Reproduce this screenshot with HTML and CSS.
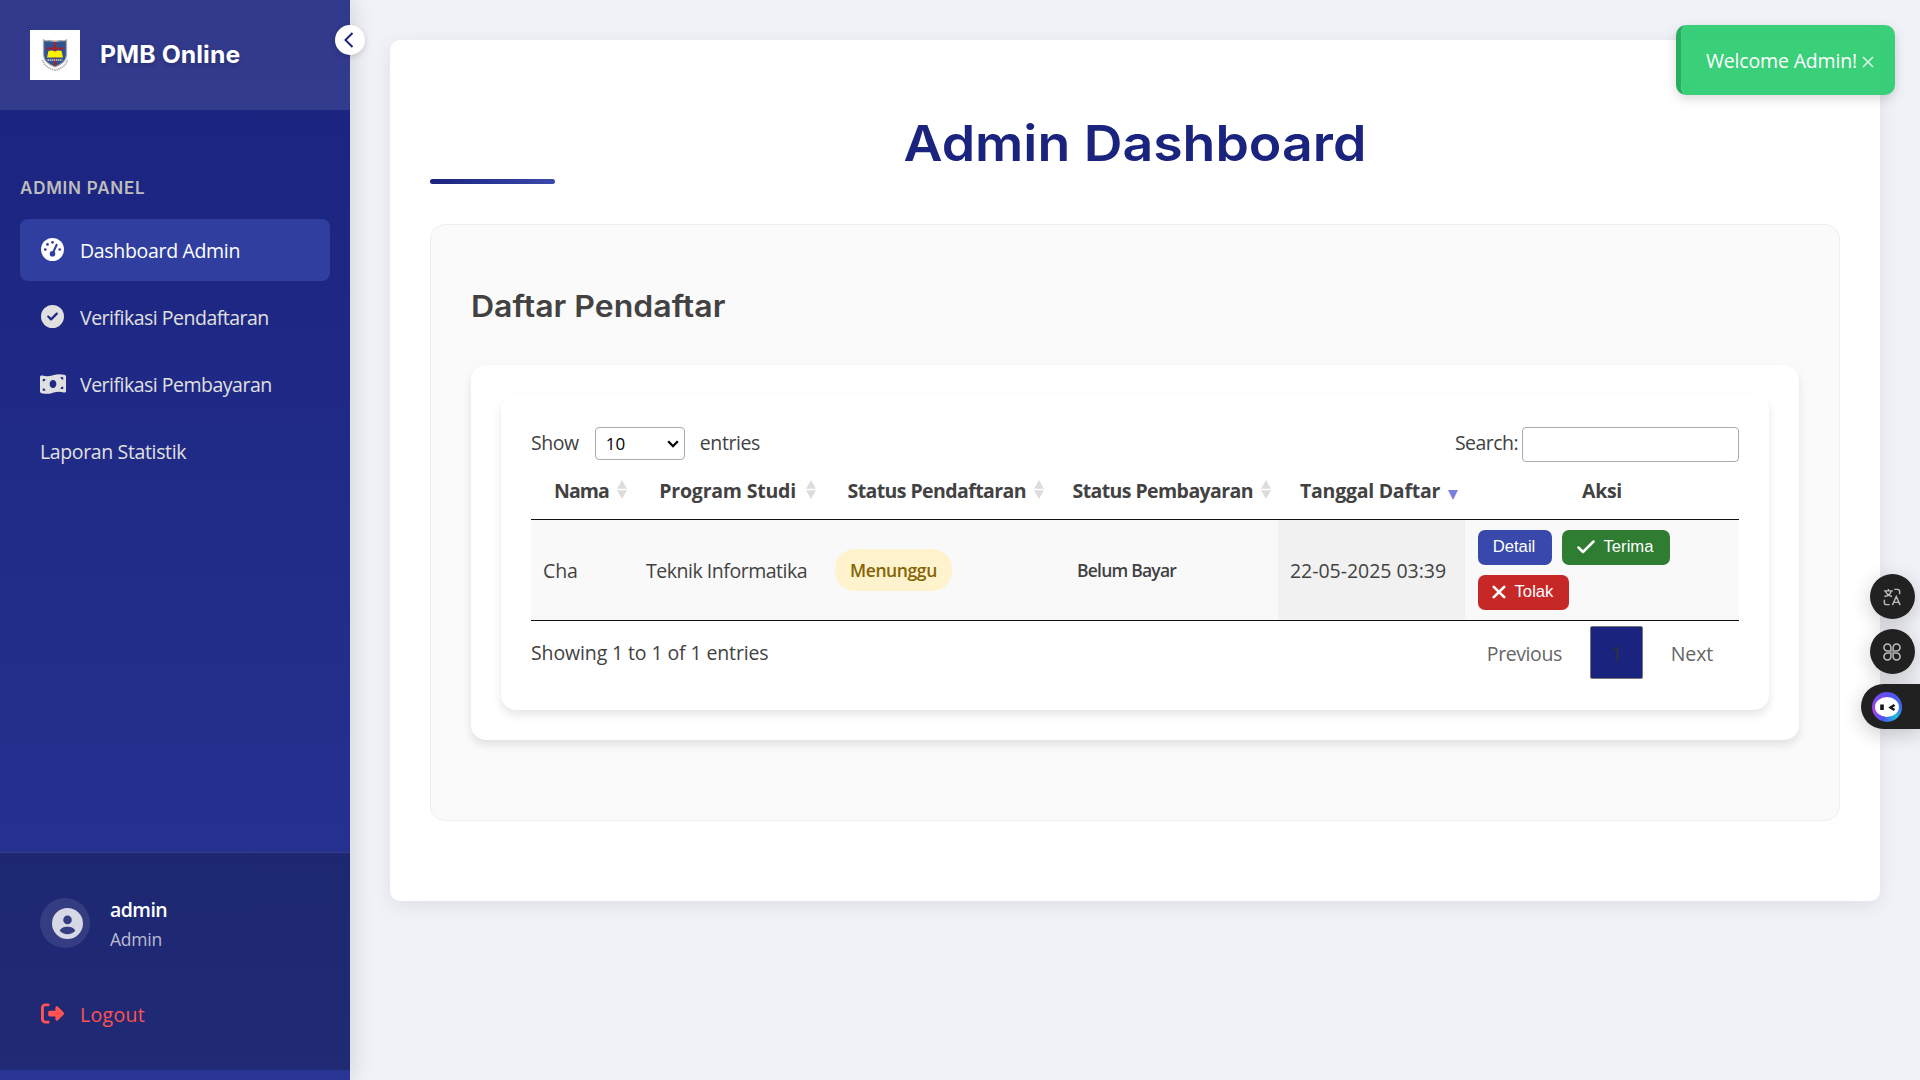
FILE: index.html
```html
<!DOCTYPE html>
<html lang="id">
<head>
<meta charset="utf-8">
<title>PMB Online - Admin Dashboard</title>
<link rel="stylesheet" href="styles.css">
</head>
<body>
<div class="layout">
  <aside class="sidebar">
    <header class="brand">
      <svg class="brand-logo" viewBox="0 0 50 50">
        <rect width="50" height="50" fill="#fff"/>
        <path d="M12.500 30 Q15 38 25 40 Q35 38 37.500 30" fill="none" stroke="#aaa" stroke-width="1.800" stroke-dasharray="1.200 .8"/>
        <path d="M13.500 10 Q16 11.500 19 10.500 Q25 12 31 10.500 Q34 11.500 36.500 10 V25 Q36 33 25 37 Q14 33 13.500 25Z" fill="#315393" stroke="#aaa" stroke-width="1.300"/>
        <path d="M25 12V36M16.500 18.500H33.500" stroke="#a91f2b" stroke-width="2.200"/>
        <path d="M18.500 21Q22 20 25 21.500Q28 20 31.500 21L33 27.500H17Z" fill="#fff200"/>
        <path d="M17.500 30H32.500" stroke="#d0cfc0" stroke-width="1.500" stroke-dasharray="1.500 .6"/>
      </svg>
      <span class="brand-name text">PMB Online</span>
      <button class="collapse" aria-label="Collapse sidebar"><svg viewBox="0 0 10 16"><path d="M8.500 1 1.500 8l7 7" fill="none" stroke="currentColor" stroke-width="2"/></svg></button>
    </header>
    <nav class="menu">
      <div class="menu-label"><span class="text">ADMIN PANEL</span></div>
      <a class="menu-item dashboard active">
        <svg class="menu-icon" viewBox="0 0 512 512"><path fill="currentColor" d="M256 0a256 256 0 1 0 0 512 256 256 0 1 0 0-512z"/><g class="cut"><circle cx="256" cy="96" r="30"/><circle cx="144" cy="144" r="30"/><circle cx="96" cy="256" r="30"/><circle cx="416" cy="256" r="30"/><circle cx="256" cy="352" r="62"/></g><path d="M256 352 348 150" class="needle"/></svg>
        <span class="text">Dashboard Admin</span>
      </a>
      <a class="menu-item">
        <svg class="menu-icon" viewBox="0 0 512 512"><path fill="currentColor" d="M256 512A256 256 0 1 0 256 0a256 256 0 1 0 0 512zM369 209L241 337c-9.400 9.400-24.600 9.400-33.900 0l-64-64c-9.400-9.400-9.400-24.600 0-33.900s24.600-9.400 33.900 0l47 47L335 175c9.400-9.400 24.600-9.400 33.900 0s9.400 24.600 0 33.900z"/></svg>
        <span class="text">Verifikasi Pendaftaran</span>
      </a>
      <a class="menu-item">
        <svg class="menu-icon wide" viewBox="0 0 26 20"><path fill="currentColor" fill-rule="evenodd" d="M0 3.100C0 1.700 1.200 1.300 2.300 1.600 6 2.600 9.500 2.400 13 1.300 17-.1 20.500-.2 24.300.8 25.400 1.100 26 1.800 26 2.800V16.900C26 18.300 24.800 18.700 23.700 18.400 20 17.400 16.500 17.600 13 18.700 9 20.100 5.500 20.200 1.700 19.200.6 18.900 0 18.200 0 17.200ZM13 5.900C10.900 5.900 9.600 7.800 9.600 10S10.900 14.100 13 14.100 16.400 12.200 16.400 10 15.100 5.900 13 5.900ZM2.800 5V7.500C4.300 7.500 5.500 6.500 5.500 5.100ZM2.800 16.700H5.500C5.500 15.200 4.300 14.300 2.800 14.300ZM23.200 15V12.500C21.700 12.500 20.500 13.500 20.500 14.900ZM23.200 3.300 20.500 3.100C20.500 4.700 21.700 5.700 23.200 5.700Z"/></svg>
        <span class="text">Verifikasi Pembayaran</span>
      </a>
      <a class="menu-item report"><span class="text">Laporan Statistik</span></a>
    </nav>
    <footer class="account">
      <div class="profile">
        <div class="avatar"><svg viewBox="0 0 24 24"><path fill="currentColor" fill-rule="evenodd" d="M12 0a12 12 0 1 0 0 24 12 12 0 0 0 0-24Zm0 5.900a3.300 3.300 0 1 1 0 6.600 3.300 3.300 0 0 1 0-6.600ZM6 17.700c1-4.300 11-4.300 12 0-2.800 3.600-9.200 3.600-12 0Z"/></svg></div>
        <div class="who"><strong>admin</strong><small>Admin</small></div>
      </div>
      <a class="logout">
        <svg class="menu-icon" viewBox="0 0 512 512"><path fill="currentColor" d="M377.900 105.900L500.700 228.700c7.200 7.200 11.300 17.100 11.300 27.300s-4.100 20.100-11.300 27.300L377.900 406.100c-6.400 6.400-15 9.900-24 9.900c-18.700 0-33.900-15.200-33.900-33.900l0-62.100-128 0c-17.700 0-32-14.300-32-32l0-64c0-17.700 14.300-32 32-32l128 0 0-62.100c0-18.700 15.200-33.900 33.900-33.900c9 0 17.600 3.600 24 9.900zM160 96L96 96c-17.700 0-32 14.300-32 32l0 256c0 17.700 14.300 32 32 32l64 0c17.700 0 32 14.300 32 32s-14.300 32-32 32l-64 0c-53 0-96-43-96-96L0 128C0 75 43 32 96 32l64 0c17.700 0 32 14.300 32 32s-14.300 32-32 32z"/></svg>
        <span class="text">Logout</span>
      </a>
    </footer>
  </aside>

  <main class="page">
    <h1><span class="text">Admin Dashboard</span></h1>
    <section class="panel">
      <h2><span class="text">Daftar Pendaftar</span></h2>
      <div class="card">
        <div class="card table-card">
          <div class="controls">
            <label class="length"><span class="text">Show</span><span class="select"><span>10</span><svg viewBox="0 0 12 8"><path d="M1.200 1.300 6 6.200l4.800-4.900" fill="none" stroke="#000" stroke-width="2.300"/></svg></span><span class="text">entries</span></label>
            <label class="search"><span class="text">Search:</span><input type="text"></label>
          </div>
          <table>
            <colgroup><col class="c1"><col class="c2"><col class="c3"><col class="c4"><col class="c5"><col></colgroup>
            <thead><tr>
              <th class="th-name"><div class="head"><span class="text">Nama</span><i class="sort"></i></div></th>
              <th class="th-program"><div class="head"><span class="text">Program Studi</span><i class="sort"></i></div></th>
              <th class="th-status"><div class="head"><span class="text">Status Pendaftaran</span><i class="sort"></i></div></th>
              <th class="th-status"><div class="head"><span class="text">Status Pembayaran</span><i class="sort"></i></div></th>
              <th class="th-date"><div class="head"><span class="text">Tanggal Daftar</span><i class="sort desc"></i></div></th>
              <th><div class="head plain"><span class="text">Aksi</span></div></th>
            </tr></thead>
            <tbody><tr>
              <td>Cha</td>
              <td><span class="text program">Teknik Informatika</span></td>
              <td class="badge-cell"><span class="status waiting">Menunggu</span></td>
              <td class="badge-cell"><span class="status unpaid">Belum Bayar</span></td>
              <td class="sorted"><span class="text">22-05-2025 03:39</span></td>
              <td class="badge-cell"><div class="actions">
                <button class="btn detail">Detail</button>
                <button class="btn accept"><svg viewBox="0 0 18 14"><path d="M1.500 7.500 6 12 16.500 1.500" fill="none" stroke="#fff" stroke-width="2.500" stroke-linecap="round" stroke-linejoin="round"/></svg>Terima</button>
                <button class="btn reject"><svg viewBox="0 0 14 14"><path d="m1.800 1.800 10.400 10.400M12.200 1.800 1.800 12.200" stroke="#fff" stroke-width="2.600" stroke-linecap="round"/></svg>Tolak</button>
              </div></td>
            </tr></tbody>
          </table>
          <div class="table-foot">
            <span class="text info">Showing 1 to 1 of 1 entries</span>
            <div class="pager"><a>Previous</a><a class="current">1</a><a class="next">Next</a></div>
          </div>
        </div>
      </div>
    </section>
  </main>
</div>

<div class="toast"><span class="text">Welcome Admin!</span><svg viewBox="0 0 12 12"><path d="m1 1 10 10M11 1 1 11" stroke="currentColor" stroke-width="1.700"/></svg></div>

<div class="tools">
  <button class="tool" aria-label="Translate"><svg viewBox="0 0 20 20" fill="none" stroke="#bbbabd" stroke-width="1.600"><path d="M1 3.200h10M6 1v2M3 3.500c.6 2.800 3 5 7 6M9 3.500C8.500 6.500 5.500 8.800 1.500 9.500M12.500 1.500H16a2.500 2.500 0 0 1 2.500 2.500v3M1.500 13v3A2.500 2.500 0 0 0 4 18.500h3.500M10.500 19 14.800 9.500 19 19M12 16h5.500"/></svg></button>
  <button class="tool" aria-label="Apps"><svg viewBox="0 0 20 20" fill="none" stroke="#bbbabd" stroke-width="1.700"><path d="M8.800 8.800H5A3.900 3.900 0 1 1 8.800 5ZM11.200 8.800V5A3.900 3.900 0 1 1 15 8.800ZM8.800 11.200V15A3.900 3.900 0 1 1 5 11.200ZM11.200 11.200H15A3.900 3.900 0 1 1 11.200 15Z"/></svg></button>
  <button class="tool assistant" aria-label="Assistant"><span class="face"><svg viewBox="0 0 24 20"><ellipse cx="12" cy="10" rx="12" ry="10" fill="#fff"/><path d="M7 7.500v5.500" stroke="#151515" stroke-width="3.600"/><path d="m19.500 8-4 2.500 4 2.500" fill="none" stroke="#151515" stroke-width="2.400"/></svg></span></button>
</div>
</body>
</html>
```
FILE: styles.css
```css
* { box-sizing: border-box; }
body {
  margin: 0;
  height: 1080px;
  overflow: hidden;
  background: #f0f2f7;
  color: #424242;
  font: 19.5px/30px "Open Sans", "Noto Sans", sans-serif;
}
button { border: 0; font: inherit; padding: 0; }
svg { display: block; flex: none; }
.text { white-space: nowrap; }
.layout { display: flex; height: 1080px; }

.sidebar {
  display: flex;
  flex-direction: column;
  width: 350px;
  flex: none;
  padding-bottom: 10px;
  background: linear-gradient(180deg, #1a237e, #283593);
  box-shadow: 5px 0 20px rgba(0, 0, 0, .1);
  color: #e0e0e0;
}
.brand {
  position: relative;
  display: flex;
  align-items: center;
  gap: 20px;
  height: 110px;
  padding: 0 30px;
  background: rgba(255, 255, 255, .1);
}
.brand-logo { width: 50px; height: 50px; }
.brand-name {
  color: #fff;
  font: 700 24px/36px Inter, sans-serif;
  letter-spacing: .1px;
  text-shadow: 0 2px 4px rgba(0, 0, 0, .2);
  transform: scaleX(1.03);
  transform-origin: left;
}
.collapse {
  position: absolute;
  right: -15px;
  top: 25px;
  display: flex;
  align-items: center;
  justify-content: center;
  width: 30px;
  height: 30px;
  border-radius: 50%;
  background: #fff;
  color: #1a237e;
  box-shadow: 0 2px 6px rgba(0, 0, 0, .15);
}
.collapse svg { width: 10px; height: 16px; margin: -1px 2px 0 0; }
.menu { display: flex; flex-direction: column; gap: 5px; padding: 63px 20px 0; }
.menu-label {
  height: 41px;
  color: #bdbdbd;
  font: 600 17px/30px Inter, sans-serif;
  letter-spacing: .76px;
}
.menu-item, .logout {
  display: flex;
  align-items: center;
  height: 62px;
  padding: 2px 20px 0;
  border-radius: 8px;
  letter-spacing: -.5px;
}
.menu-item.active { background: #303f9f; color: #fff; }
.menu-item.dashboard { letter-spacing: -.32px; }
.menu-item.report { letter-spacing: -.36px; }
.menu-icon { width: 23px; height: 23px; margin: -4px 16px 0 1px; }
.menu-icon.wide { width: 26px; height: 20px; margin: -3px 14px 0 0; }
.cut { fill: #303f9f; }
.needle { stroke: #303f9f; stroke-width: 46; stroke-linecap: round; }

.account {
  margin-top: auto;
  height: 218px;
  padding: 45px 20px 0;
  border-top: 1px solid rgba(255, 255, 255, .1);
  background: rgba(0, 0, 0, .2);
}
.profile { display: flex; gap: 20px; padding-left: 20px; height: 85px; }
.avatar {
  display: flex;
  align-items: center;
  justify-content: center;
  width: 50px;
  height: 50px;
  padding-left: 5px;
  border-radius: 50%;
  background: rgba(255, 255, 255, .1);
  color: rgba(255, 255, 255, .8);
}
.avatar svg { width: 31px; height: 31px; }
.who { display: flex; flex-direction: column; margin-top: -3px; }
.who strong { color: #fff; font-weight: 600; letter-spacing: -.55px; }
.who small { font-size: 17.5px; line-height: 29px; color: rgba(255, 255, 255, .7); letter-spacing: -.2px; }
.logout { color: #ff5252; font-weight: 500; letter-spacing: .3px; }

.page {
  flex: 1;
  height: 861px;
  margin: 40px 40px 0;
  padding: 74px 40px 0;
  border-radius: 10px;
  background: #fff;
  box-shadow: 0 5px 20px rgba(0, 0, 0, .08);
}
h1 {
  margin: 0 0 40px;
  color: #1a237e;
  font: 600 50px/58px Inter, sans-serif;
  text-align: center;
}
h1 .text { display: inline-block; transform: scaleX(1.072); }
h1::after {
  content: "";
  display: block;
  width: 125px;
  height: 5px;
  margin-top: 7px;
  border-radius: 3px;
  background: linear-gradient(90deg, #1a237e, #3949ab);
}
.panel {
  height: 597px;
  padding: 59px 40px 0;
  border: 1px solid #eee;
  border-radius: 15px;
  background: #fafafa;
}
h2 { margin: 0 0 36px; font: 600 30px/45px Inter, sans-serif; }
h2 .text { display: inline-block; transform: scaleX(1.067); transform-origin: left; }
.card {
  padding: 30px;
  border-radius: 15px;
  background: #fff;
  box-shadow: 0 5px 10px rgba(0, 0, 0, .1);
}
.table-card { height: 315px; padding: 32px 30px 0; }
.controls { display: flex; justify-content: space-between; height: 38px; }
.length, .search { display: flex; align-items: flex-start; letter-spacing: -.42px; }
.length > .text, .search > .text { line-height: 31px; }
.search > .text { letter-spacing: -.55px; }
.select {
  display: flex;
  align-items: center;
  justify-content: space-between;
  width: 90px;
  height: 33px;
  margin: 0 15px 0 16px;
  padding: 0 5px 0 10px;
  border: 1px solid #aaa;
  border-radius: 4px;
  color: #000;
  font-size: 17px;
  letter-spacing: 0;
}
.select svg { width: 12px; height: 8px; }
.search input {
  width: 217px;
  height: 35px;
  margin-left: 4px;
  border: 1px solid #aaa;
  border-radius: 4px;
}
table { width: 1208px; table-layout: fixed; border-collapse: separate; border-spacing: 0; }
.c1 { width: 103px; } .c2 { width: 189px; } .c3 { width: 228px; } .c4 { width: 227px; } .c5 { width: 187px; }
th { height: 55px; padding: 0; border-bottom: 1px solid #111; font-weight: 700; vertical-align: top; letter-spacing: -.3px; }
.head { display: flex; align-items: center; justify-content: flex-end; gap: 8px; padding: 11px 7px 0 0; }
.head.plain { justify-content: center; padding-right: 0; }
.th-name { letter-spacing: -.9px; }
.th-program { letter-spacing: -.2px; }
.th-program .head { gap: 10px; }
.th-status { letter-spacing: -.58px; }
.th-date { letter-spacing: -.26px; }
.sort {
  width: 10px;
  height: 19px;
  margin-top: -3px;
  background: #ddd;
  clip-path: polygon(50% 0, 100% 46%, 0 46%, 0 54%, 100% 54%, 50% 100%, 0 54%, 0 46%);
}
.sort.desc {
  height: 10px;
  margin-top: 8px;
  background: #7b7fe0;
  clip-path: polygon(0 0, 100% 0, 50% 100%);
}
td { height: 101px; padding: 2px 12px 0; border-bottom: 1px solid #111; background: #f9f9f9; letter-spacing: -.1px; }
td.badge-cell { padding-top: 0; }
td.sorted { background: #f1f1f1; letter-spacing: -.03px; }
.program { letter-spacing: -.47px; }
.status { display: inline-block; height: 42px; padding: 0 15px; font-size: 17.5px; line-height: 43px; font-weight: 600; letter-spacing: -.4px; vertical-align: middle; }
.waiting { border-radius: 20px; background: #fff3cd; color: #856404; }
.unpaid { padding-left: 14px; letter-spacing: -.78px; }
.actions { display: flex; flex-wrap: wrap; gap: 10px; padding-left: 1px; }
.btn {
  display: flex;
  align-items: center;
  justify-content: center;
  height: 35px;
  padding: 0 2px 2px 0;
  border-radius: 7px;
  color: #fff;
  font: 16.67px/20px "Liberation Sans", sans-serif;
  letter-spacing: 0;
}
.detail { width: 74px; background: #3949ab; }
.accept { width: 108px; gap: 9px; background: #2e7d32; }
.accept svg { width: 18px; height: 14px; }
.reject { width: 91px; gap: 9px; background: #c62828; }
.reject svg { width: 14px; height: 14px; }
.table-foot { display: flex; justify-content: space-between; padding-top: 5px; }
.info { line-height: 53px; letter-spacing: -.12px; }
.pager { display: flex; gap: 2px; color: #666; letter-spacing: -.42px; }
.pager a { display: flex; align-items: center; height: 53px; padding: 2px 26px 0; }
.pager .next { letter-spacing: -.15px; }
.pager .current {
  width: 53px;
  justify-content: center;
  padding: 2px 0 0;
  border: 1px solid #777;
  border-radius: 2px;
  background: #1a237e;
  color: #333;
}

.toast {
  position: absolute;
  right: 25px;
  top: 25px;
  display: flex;
  align-items: center;
  gap: 5px;
  width: 219px;
  height: 70px;
  padding: 2px 0 0 25px;
  border-left: 5px solid #27ae60;
  border-radius: 10px;
  background: rgba(46, 204, 113, .94);
  background-clip: padding-box;
  box-shadow: 0 4px 12px rgba(0, 0, 0, .15);
  color: #fff;
  letter-spacing: -.17px;
}
.toast svg { width: 12px; height: 12px; opacity: .8; margin-top: 2px; }

.tools {
  position: absolute;
  right: 0;
  top: 574px;
  display: flex;
  flex-direction: column;
  align-items: flex-end;
  gap: 10px;
}
.tool {
  display: flex;
  align-items: center;
  justify-content: center;
  width: 45px;
  height: 45px;
  margin-right: 5px;
  padding-right: 2px;
  border-radius: 50%;
  background: #212121;
  box-shadow: 0 5px 20px rgba(0, 0, 0, .2);
}
.tool svg { width: 18px; height: 18px; }
.assistant {
  justify-content: flex-start;
  width: 59px;
  margin-right: 0;
  padding-left: 11px;
  border-radius: 23px 0 0 23px;
}
.face {
  display: flex;
  align-items: center;
  justify-content: center;
  width: 30px;
  height: 30px;
  border-radius: 50%;
  background: conic-gradient(#5b4df0, #3d6bf5 25%, #22b8e0 38%, #4a55f0 55%, #a044e8 70%, #5b4df0);
}
.face svg { width: 24px; height: 20px; }
```
